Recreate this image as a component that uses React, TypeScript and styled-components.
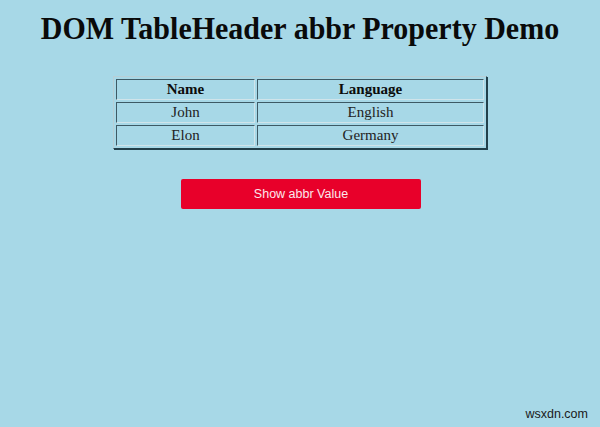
import React from "react";
import styled, { createGlobalStyle } from "styled-components";

const Global = createGlobalStyle`
  html, body { margin: 0; padding: 0; }
  body {
    background: #a7d8e7;
    width: 600px;
    height: 427px;
    overflow: hidden;
    font-family: "Liberation Serif", "Times New Roman", serif;
  }
`;

const Page = styled.div`
  position: relative;
  width: 600px;
  height: 427px;
  display: flex;
  flex-direction: column;
  align-items: center;
`;

const Title = styled.h1`
  margin: 11px 0 0;
  font-family: "Liberation Serif", "Times New Roman", serif;
  font-weight: bold;
  font-size: 30px;
  line-height: 36px;
  color: #0a0a0a;
  text-align: center;
  transform: scaleY(1.05);
`;

const Table = styled.table`
  margin-top: 29px;
  width: 374px;
  border-collapse: separate;
  border-spacing: 2px;
  border-style: solid;
  border-width: 1px;
  border-color: #b9cfd6 #22404b #22404b #b9cfd6;
  box-shadow: 1px 1px 0 #22404b;
  font-family: "Liberation Serif", "Times New Roman", serif;
  font-size: 15px;
  color: #1c1c1c;
`;

const Cell = styled.td<{ $head?: boolean; $w?: number }>`
  border-style: solid;
  border-width: 1px;
  border-color: #3d5a65 #d0e4ea #d0e4ea #3d5a65;
  padding: 1px;
  height: 17px;
  line-height: 17px;
  text-align: center;
  font-weight: ${(p) => (p.$head ? "bold" : "normal")};
  color: ${(p) => (p.$head ? "#0c0c0c" : "#222")};
  width: ${(p) => (p.$w ? `${p.$w}px` : "auto")};
`;

const Button = styled.button`
  margin-top: 30px;
  margin-left: 2px;
  width: 240px;
  height: 30px;
  border: none;
  border-radius: 2px;
  background: #e8002a;
  color: #fbe8ec;
  font-family: "Liberation Sans", Arial, sans-serif;
  font-size: 12.5px;
  cursor: pointer;
  padding: 0;
`;

const Watermark = styled.div`
  position: absolute;
  right: 12px;
  bottom: 6px;
  font-family: "Liberation Sans", Arial, sans-serif;
  font-size: 12.5px;
  color: #1a1a1a;
`;

const rows = [
  ["John", "English"],
  ["Elon", "Germany"],
];

export default function App() {
  return (
    <>
      <Global />
      <Page>
        <Title>DOM TableHeader abbr Property Demo</Title>
        <Table>
          <tbody>
            <tr>
              <Cell as="th" $head $w={135}>Name</Cell>
              <Cell as="th" $head>Language</Cell>
            </tr>
            {rows.map(([n, l]) => (
              <tr key={n}>
                <Cell>{n}</Cell>
                <Cell>{l}</Cell>
              </tr>
            ))}
          </tbody>
        </Table>
        <Button>Show abbr Value</Button>
        <Watermark>wsxdn.com</Watermark>
      </Page>
    </>
  );
}
